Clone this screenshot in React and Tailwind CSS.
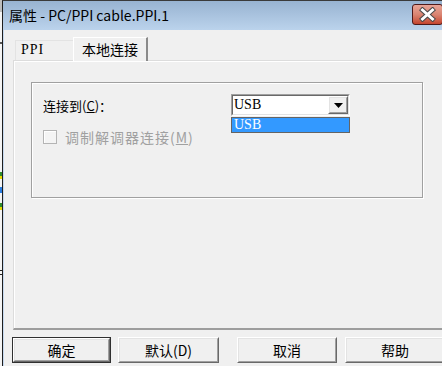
import React from "react";

const cjk = "font-[family-name:'Noto_Sans_CJK_SC','Noto_Sans',sans-serif]";
const serif = "font-[family-name:'Liberation_Serif','Noto_Sans_CJK_SC',serif]";

function Raised({ children, className = "" }) {
  return (
    <div className={`border border-t-white border-l-white border-b-[#696969] border-r-[#696969] ${className}`}>
      <div className="h-full w-full border border-t-[#e3e3e3] border-l-[#e3e3e3] border-b-[#a0a0a0] border-r-[#a0a0a0] bg-[#f0f0f0] flex items-center justify-center">
        {children}
      </div>
    </div>
  );
}

function DialogButton({ label, def, className = "" }) {
  return (
    <div className={`${def ? "border border-[#303030]" : ""} h-[26px] shrink-0 ${className}`}>
      <Raised className="h-full">
        <span className={`${cjk} text-[14px] leading-none text-black`}>{label}</span>
      </Raised>
    </div>
  );
}

function ComboBox() {
  return (
    <div className="relative w-[119px] h-[22px]">
      <div className="h-full border border-t-[#a0a0a0] border-l-[#a0a0a0] border-b-white border-r-white">
        <div className="h-full border border-t-[#696969] border-l-[#696969] border-b-[#e3e3e3] border-r-[#e3e3e3] bg-white flex items-center">
          <span className={`${serif} text-[14px] leading-none text-black pl-[1px] flex-1`}>USB</span>
          <Raised className="w-[20px] h-[18px]">
            <svg width="9" height="5" viewBox="0 0 9 5">
              <path d="M0 0H9L4.5 5Z" fill="#000" />
            </svg>
          </Raised>
        </div>
      </div>
      {/* open list */}
      <div className="absolute left-0 top-full mt-[1px] w-[119px] h-[16px] border border-[#646464] bg-[#3399ff] flex items-center">
        <span className={`${serif} text-[14px] leading-none text-white pl-[2px]`}>USB</span>
      </div>
    </div>
  );
}

export default function App() {
  return (
    <div className="w-[442px] h-[366px] overflow-hidden bg-[#f0f0f0] flex">
      {/* sliver of the window behind */}
      <div className="w-[2px] h-full flex flex-col bg-[#f4f4f4]">
        <div className="h-[12px] bg-[#bdbdbd]" />
        <div className="h-[30px]" />
        <div className="h-[2px] bg-[#555]" />
        <div className="h-[128px]" />
        <div className="h-[4px] bg-[#2e8b2e]" />
        <div className="h-[3px] bg-[#e8d800]" />
        <div className="h-[8px]" />
        <div className="h-[6px] bg-[#2a7de1]" />
        <div className="h-[10px]" />
        <div className="h-[4px] bg-[#2e8b2e]" />
        <div className="h-[3px] bg-[#e8d800]" />
        <div className="h-[60px]" />
        <div className="h-[1px] bg-[#222]" />
        <div className="h-[3px]" />
        <div className="h-[1px] bg-[#222]" />
      </div>

      {/* dialog window */}
      <div className="flex-1 min-w-0 flex flex-col border-l border-[#1e1e1e] border-t border-t-[#3a3a3a]">
        {/* title bar */}
        <div className="h-[29px] flex items-center justify-between bg-gradient-to-b from-[#98b3d1] to-[#bbd3ec] pl-[6px]">
          <span className={`${cjk} text-[14px] leading-none text-black pb-[1px]`}>
            属性 - PC/PPI cable.PPI.1
          </span>
          <div className="w-[31px] h-[21px] mb-[3px] mr-[-1px] rounded-[3px] border border-[#4e1a1a] bg-gradient-to-b from-[#e8a597] via-[#d98472] to-[#c4442e] flex items-center justify-center">
            <svg width="17" height="15" viewBox="0 0 17 15">
              <path d="M3.5 3L13.5 12M13.5 3L3.5 12" stroke="#4a4a4a" strokeWidth="5" strokeLinecap="square" />
              <path d="M3.5 3L13.5 12M13.5 3L3.5 12" stroke="#fff" strokeWidth="3" strokeLinecap="square" />
            </svg>
          </div>
        </div>

        {/* client area */}
        <div className="flex-1 flex flex-col border-l border-[#c6d9ef] pl-[9px] pt-[6px]">
          {/* tab strip */}
          <div className="h-[24px] flex items-end pl-[2px]">
            <div className="w-[58px] h-[20px] border-t border-l border-t-[#e3e3e3] border-l-[#e3e3e3] flex items-center pl-[5px] pb-[1px]">
              <span className={`${serif} text-[14px] tracking-[1px] leading-none text-black`}>PPI</span>
            </div>
            <div className="w-[75px] h-[24px] mb-[-1px] border-t border-l border-r-2 border-t-white border-l-white border-r-[#8a8a8a] bg-[#f0f0f0] flex items-center justify-center pb-[2px] relative z-10">
              <span className={`${cjk} text-[14px] leading-none text-black`}>本地连接</span>
            </div>
          </div>

          {/* tab page */}
          <div className="h-[270px] mr-[-20px] border-t border-l border-t-[#dcdcdc] border-l-[#dcdcdc] border-b-2 border-b-[#9d9d9d] shadow-[inset_1px_1px_0_#fff] pt-[21px] pl-[17px]">
            {/* group box */}
            <div className="w-[392px] h-[116px] border border-[#a0a0a0] shadow-[inset_1px_1px_0_#fff,1px_1px_0_#fff] pt-[11px] pl-[11px]">
              <div className="flex items-center">
                <span className={`${cjk} w-[188px] shrink-0 text-[13px] leading-none text-black`}>
                  连接到(<span className="underline">C</span>)：
                </span>
                <ComboBox />
              </div>
              <div className="flex items-center mt-[14px]">
                <div className="w-[14px] h-[14px] border border-[#b4b4b4] bg-[#f4f4f4] shadow-[inset_1px_1px_0_#fff]" />
                <span className={`${cjk} ml-[8px] text-[14px] tracking-[1px] leading-none text-[#a0a0a0]`}>
                  调制解调器连接(<span className="underline">M</span>)
                </span>
              </div>
            </div>
          </div>

          {/* buttons */}
          <div className="flex mt-[7px]">
            <DialogButton label="确定" def className="w-[99px] ml-[-1px]" />
            <DialogButton label="默认(D)" className="w-[101px] ml-[7px]" />
            <DialogButton label="取消" className="w-[100px] ml-[18px]" />
            <DialogButton label="帮助" className="w-[100px] ml-[8px]" />
          </div>
        </div>
      </div>
    </div>
  );
}
